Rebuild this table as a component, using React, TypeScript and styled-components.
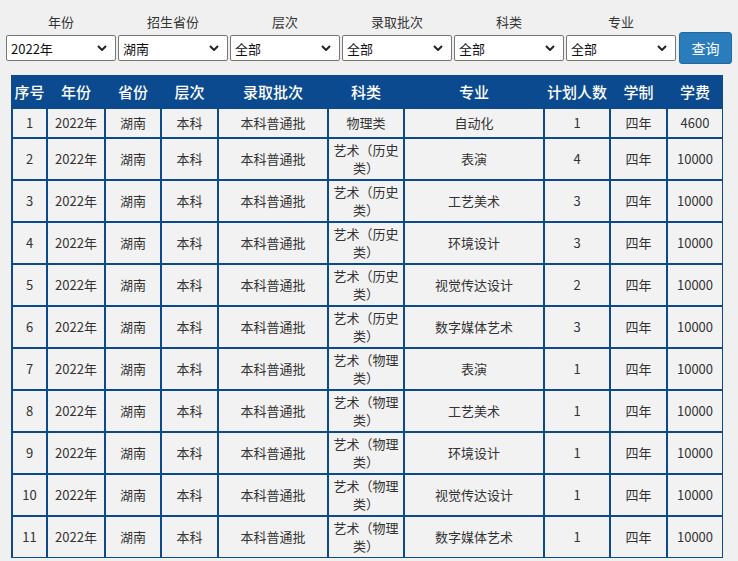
import React from "react";
import styled, { createGlobalStyle } from "styled-components";

const Global = createGlobalStyle`
  html, body { margin: 0; padding: 0; background: #f0f0f0; }
  body { font-family: "Microsoft YaHei", "Noto Sans CJK SC", "Noto Sans", sans-serif; color: #333; }
`;

const Page = styled.div`
  padding: 12px 0 0 6px;
  width: 732px;
  box-sizing: border-box;
`;

const FilterBar = styled.div`
  display: flex;
  align-items: flex-end;
  gap: 2px;
`;

const Field = styled.div`
  display: flex;
  flex-direction: column;
  align-items: center;
  width: 110px;
`;

const Label = styled.div`
  height: 20px;
  line-height: 20px;
  font-size: 13px;
  color: #333;
  margin-bottom: 3px;
`;

const chevron =
  "data:image/svg+xml;utf8," +
  encodeURIComponent(
    '<svg xmlns="http://www.w3.org/2000/svg" width="10" height="6" viewBox="0 0 10 6"><path d="M1 1l4 4 4-4" fill="none" stroke="#222" stroke-width="2"/></svg>'
  );

const Select = styled.select`
  appearance: none;
  -webkit-appearance: none;
  width: 110px;
  height: 26px;
  box-sizing: border-box;
  border: 1px solid #767676;
  border-radius: 2px;
  background: #fff url("${chevron}") no-repeat right 8px center;
  font-family: inherit;
  font-size: 13px;
  color: #111;
  padding: 0 20px 0 4px;
  margin: 0;
`;

const Button = styled.button`
  width: 54px;
  height: 32px;
  margin: 0 0 -3px 1px;
  border: 1px solid #1f6aa3;
  border-radius: 3px;
  background: #2a7cba;
  color: #fff;
  font-family: inherit;
  font-size: 14px;
  padding: 0;
`;

const Table = styled.table`
  margin: 14px 0 0 5px;
  width: 711px;
  table-layout: fixed;
  border-collapse: separate;
  border-spacing: 0;
  border-left: 1px solid #0d4a8c;
`;

const Th = styled.th`
  background: #0b4a8e;
  color: #fff;
  font-size: 15px;
  font-weight: 500;
  height: 33px;
  padding: 0;
  text-align: center;
  white-space: nowrap;
`;

const Td = styled.td`
  background: #f2f2f2;
  border: 1px solid #0d4a8c;
  height: 24px;
  padding: 2px 4px;
  line-height: 18px;
  font-size: 13px;
  color: #333;
  text-align: center;
  vertical-align: middle;
  word-break: break-all;
`;

const widths = [35, 58, 56, 57, 110, 76, 140, 66, 57, 56];
const headers = ["序号", "年份", "省份", "层次", "录取批次", "科类", "专业", "计划人数", "学制", "学费"];

const rows: string[][] = [
  ["物理类", "自动化", "1", "4600"],
  ["艺术（历史类）", "表演", "4", "10000"],
  ["艺术（历史类）", "工艺美术", "3", "10000"],
  ["艺术（历史类）", "环境设计", "3", "10000"],
  ["艺术（历史类）", "视觉传达设计", "2", "10000"],
  ["艺术（历史类）", "数字媒体艺术", "3", "10000"],
  ["艺术（物理类）", "表演", "1", "10000"],
  ["艺术（物理类）", "工艺美术", "1", "10000"],
  ["艺术（物理类）", "环境设计", "1", "10000"],
  ["艺术（物理类）", "视觉传达设计", "1", "10000"],
  ["艺术（物理类）", "数字媒体艺术", "1", "10000"],
];

const filters: [string, string][] = [
  ["年份", "2022年"],
  ["招生省份", "湖南"],
  ["层次", "全部"],
  ["录取批次", "全部"],
  ["科类", "全部"],
  ["专业", "全部"],
];

export default function App() {
  return (
    <>
      <Global />
      <Page>
        <FilterBar>
          {filters.map(([l, v]) => (
            <Field key={l}>
              <Label>{l}</Label>
              <Select defaultValue={v}>
                <option>{v}</option>
              </Select>
            </Field>
          ))}
          <Button>查询</Button>
        </FilterBar>
        <Table>
          <colgroup>
            {widths.map((w, i) => (
              <col key={i} style={{ width: w }} />
            ))}
          </colgroup>
          <thead>
            <tr>
              {headers.map((h) => (
                <Th key={h}>{h}</Th>
              ))}
            </tr>
          </thead>
          <tbody>
            {rows.map((r, i) => (
              <tr key={i}>
                <Td>{i + 1}</Td>
                <Td>2022年</Td>
                <Td>湖南</Td>
                <Td>本科</Td>
                <Td>本科普通批</Td>
                <Td>{r[0]}</Td>
                <Td>{r[1]}</Td>
                <Td>{r[2]}</Td>
                <Td>四年</Td>
                <Td>{r[3]}</Td>
              </tr>
            ))}
          </tbody>
        </Table>
      </Page>
    </>
  );
}
